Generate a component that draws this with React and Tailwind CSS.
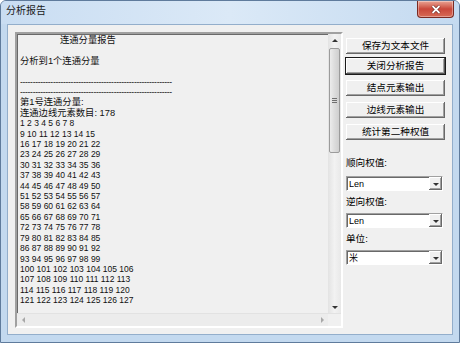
import React from "react";

const font = "font-['Liberation_Sans','Noto_Sans_CJK_SC',sans-serif]";

// 数字行：1..8 一行，之后每行 7 个
const numberRows = (() => {
  const rows = ["1 2 3 4 5 6 7 8"];
  for (let s = 9; s <= 121; s += 7) {
    const row = [];
    for (let n = s; n < s + 7; n++) row.push(n);
    rows.push(row.join(" "));
  }
  return rows;
})();

function Arrow({ dir, gray }) {
  const pts = {
    up: "1,5 4,2 7,5",
    down: "1,3 4,6 7,3",
    left: "5,1 2,4 5,7",
    right: "3,1 6,4 3,7",
  };
  return (
    <svg width="8" height="8" viewBox="0 0 8 8">
      <polygon points={pts[dir]} fill={gray ? "#a8a8a8" : "#333333"} />
    </svg>
  );
}

function Btn({ children, def }) {
  return (
    <div
      className={
        def
          ? "h-[16px] flex items-center justify-center bg-[#f0f0f0] text-[9.6px] leading-none text-black outline outline-1 outline-[#1a1a1a] shadow-[inset_-1px_-1px_#555555,inset_1px_1px_#ffffff,inset_-2px_-2px_#a0a0a0]"
          : "h-[16px] flex items-center justify-center bg-[#f0f0f0] text-[9.6px] leading-none text-black shadow-[inset_-1px_-1px_#696969,inset_1px_1px_#ffffff,inset_-2px_-2px_#a0a0a0]"
      }
    >
      {children}
    </div>
  );
}

function Select({ value }) {
  return (
    <div className="w-[97px] h-[15px] flex bg-white border border-t-[#a0a0a0] border-l-[#a0a0a0] border-r-[#ffffff] border-b-[#ffffff] shadow-[inset_1px_1px_#696969]">
      <div className="flex-1 pl-[2px] pt-[1px] text-[9px] leading-[12px] text-black">{value}</div>
      <div className="w-[13px] h-[13px] flex items-center justify-center bg-[#f0f0f0] shadow-[inset_-1px_-1px_#696969,inset_1px_1px_#ffffff,inset_-2px_-2px_#a0a0a0]">
        <Arrow dir="down" />
      </div>
    </div>
  );
}

export default function App() {
  return (
    <div className={`w-[460px] h-[343px] flex flex-col bg-[#c3d9ef] border border-[#5f7b9c] rounded-t-[6px] overflow-hidden ${font}`}>
      {/* 标题栏 */}
      <div className="h-[23px] flex items-start bg-gradient-to-r from-[#c9ddf2] via-[#dbe9f7] to-[#c4daf0] relative">
        <div className="pl-[5px] pt-[4px] text-[10px] leading-[12px] text-[#1a1a1a]">分析报告</div>
        <div className="ml-auto mr-[5px] w-[37px] h-[17px] flex items-center justify-center rounded-b-[4px] border border-t-0 border-[#7a2a22] bg-gradient-to-b from-[#e8a394] via-[#c9473a] to-[#d76a55] shadow-[inset_0_0_0_1px_rgba(255,255,255,0.35)]">
          <svg width="10" height="9" viewBox="0 0 10 9">
            <path d="M1.5 1 L8.5 8 M8.5 1 L1.5 8" stroke="#5a1a14" strokeWidth="3" />
            <path d="M1.5 1 L8.5 8 M8.5 1 L1.5 8" stroke="#ffffff" strokeWidth="1.8" />
          </svg>
        </div>
      </div>

      <div className="flex-1 flex px-[6px] pb-[7px]">
        {/* 客户区 */}
        <div className="flex-1 flex bg-[#f0f0f0] border border-[#93aecb] pl-[7px] pr-[7px] pt-[7px] pb-[6px]">
          {/* 报告文本框 */}
          <div className="w-[328px] flex flex-col border-2 border-t-[#a0a0a0] border-l-[#a0a0a0] border-r-[#ffffff] border-b-[#ffffff] shadow-[inset_1px_1px_#696969]">
            <div className="flex-1 flex min-h-0">
              <div className="flex-1 pl-[3px] pt-[1px] text-[#111111] overflow-hidden">
                <div className="text-[9.3px] leading-[10.4px] pl-[40px]">连通分量报告</div>
                <div className="h-[10.4px]" />
                <div className="text-[9.3px] leading-[10.4px]">分析到1个连通分量</div>
                <div className="h-[10.4px]" />
                <div className="text-[8.5px] leading-[10.4px] tracking-[-0.3px]">{"-".repeat(60)}</div>
                <div className="text-[8.5px] leading-[10.4px] tracking-[-0.3px]">{"-".repeat(60)}</div>
                <div className="text-[9.3px] leading-[10.4px]">第1号连通分量:</div>
                <div className="text-[9.3px] leading-[10.4px]">连通边线元素数目: 178</div>
                {numberRows.map((r) => (
                  <div key={r} className="text-[8.5px] leading-[10.4px]">{r}</div>
                ))}
              </div>
              {/* 垂直滚动条 */}
              <div className="w-[13px] flex flex-col bg-gradient-to-r from-[#e3e3e3] via-[#f2f2f2] to-[#e8e8e8]">
                <div className="h-[13px] flex items-center justify-center">
                  <Arrow dir="up" />
                </div>
                <div className="mt-[1px] h-[105px] mx-[1px] rounded-[2px] border border-[#9b9b9b] bg-gradient-to-r from-[#ececec] via-[#dcdcdc] to-[#cfcfcf] flex flex-col items-center justify-center gap-[1px]">
                  <div className="w-[5px] h-px bg-[#6f6f6f]" />
                  <div className="w-[5px] h-px bg-[#6f6f6f]" />
                  <div className="w-[5px] h-px bg-[#6f6f6f]" />
                </div>
                <div className="flex-1" />
                <div className="h-[13px] flex items-center justify-center">
                  <Arrow dir="down" />
                </div>
              </div>
            </div>
            {/* 水平滚动条（禁用） */}
            <div className="h-[13px] flex border-t border-[#e2e2e2] bg-[#ececec]">
              <div className="w-[13px] flex items-center justify-center">
                <Arrow dir="left" gray />
              </div>
              <div className="flex-1" />
              <div className="w-[13px] flex items-center justify-center">
                <Arrow dir="right" gray />
              </div>
              <div className="w-[13px] bg-[#f0f0f0]" />
            </div>
          </div>

          {/* 右侧按钮与下拉框 */}
          <div className="ml-[3px] w-[99px] flex flex-col pt-[6px] text-[9.6px] text-black">
            <Btn>保存为文本文件</Btn>
            <div className="mt-[4px]">
              <Btn def>关闭分析报告</Btn>
            </div>
            <div className="mt-[6px]">
              <Btn>结点元素输出</Btn>
            </div>
            <div className="mt-[6px]">
              <Btn>边线元素输出</Btn>
            </div>
            <div className="mt-[6px]">
              <Btn>统计第二种权值</Btn>
            </div>
            <div className="mt-[17px] h-[12px] leading-[12px]">顺向权值:</div>
            <div className="mt-[7px]">
              <Select value="Len" />
            </div>
            <div className="mt-[5px] h-[12px] leading-[12px]">逆向权值:</div>
            <div className="mt-[5px]">
              <Select value="Len" />
            </div>
            <div className="mt-[5px] h-[12px] leading-[12px]">单位:</div>
            <div className="mt-[5px]">
              <Select value="米" />
            </div>
          </div>
        </div>
      </div>
    </div>
  );
}
